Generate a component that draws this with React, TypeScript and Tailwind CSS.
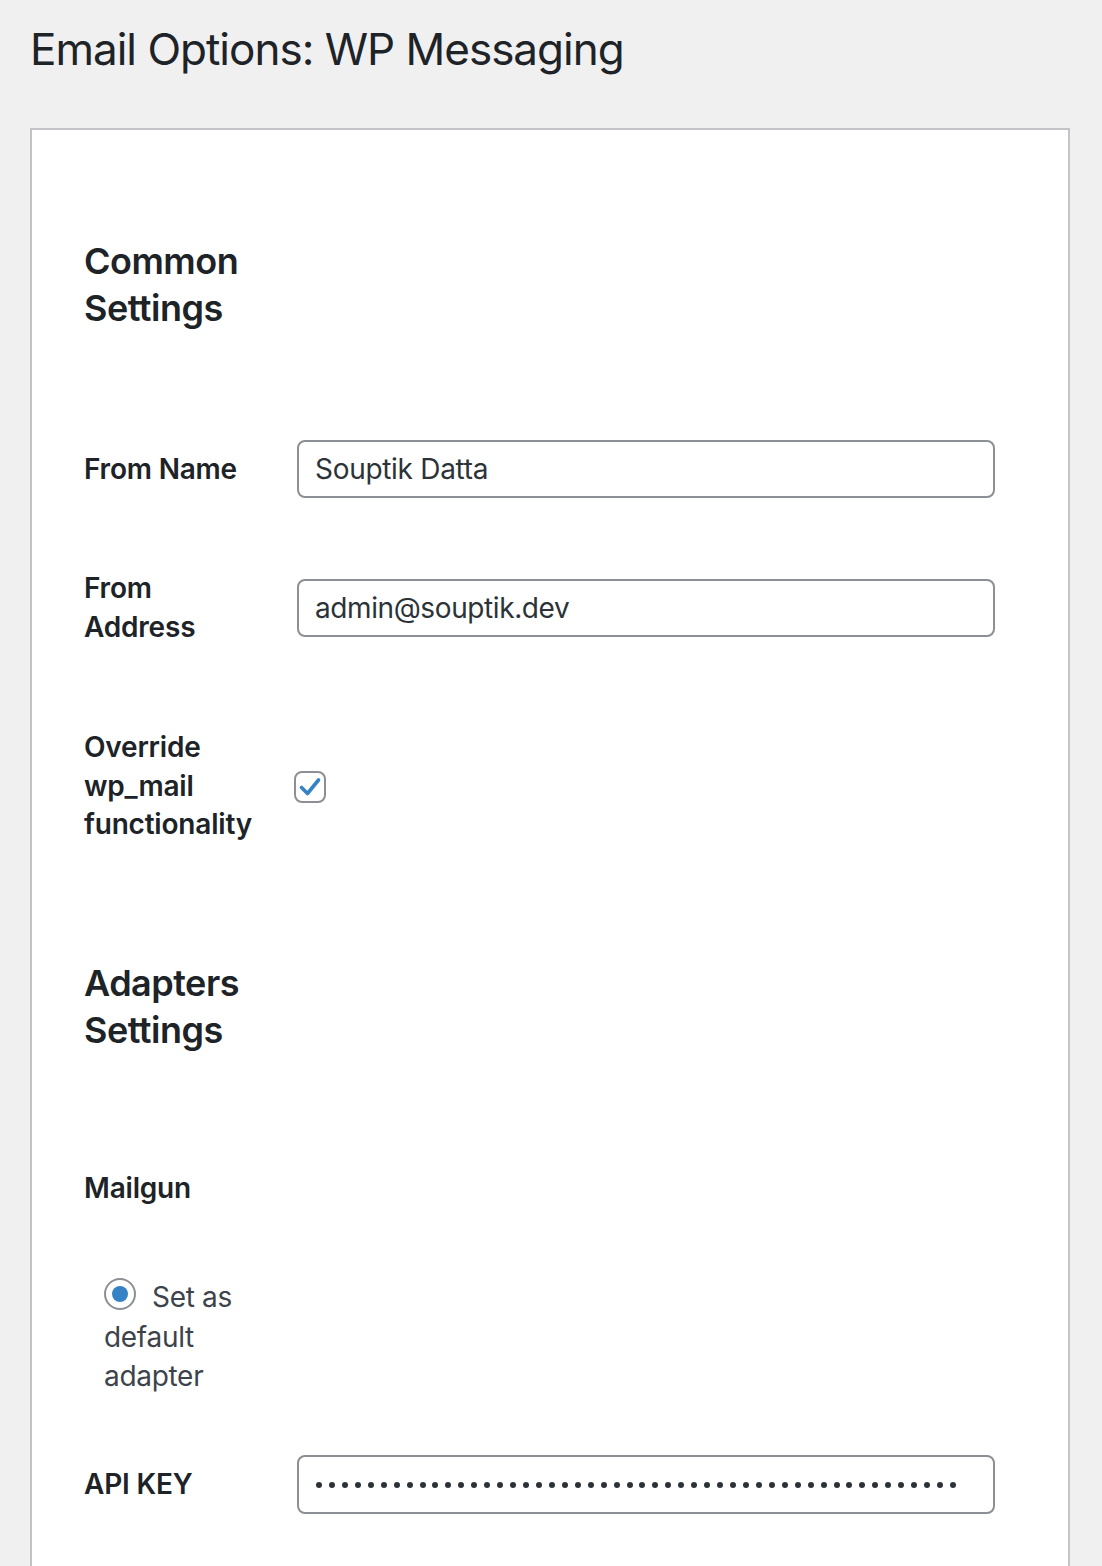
import React from "react";

const font = { fontFamily: "Inter, 'Noto Sans', 'Liberation Sans', sans-serif" };

function Row({ label, children, className = "" }: { label: React.ReactNode; children: React.ReactNode; className?: string }) {
  return (
    <div className={`flex items-center ${className}`}>
      <div className="w-[213px] shrink-0 pr-[20px] text-[28px] font-semibold leading-[38.5px] tracking-[-0.2px] text-[#1d2327]">{label}</div>
      <div className="flex-1">{children}</div>
    </div>
  );
}

export default function App() {
  const dots = Array.from({ length: 50 });
  return (
    <div style={font} className="min-h-[1566px] bg-[#f0f0f1] pl-[30px] pr-[32px] pt-[19px]">
      <h1 className="text-[44px] font-normal leading-[60px] tracking-[-1px] text-[#1d2327]">Email Options: WP Messaging</h1>
      <div className="mt-[49px] border-2 border-[#c3c4c7] bg-white pb-[200px] pl-[52px] pt-[108px]">
        <h2 className="w-[200px] text-[36px] font-semibold leading-[47px] tracking-[-0.5px] text-[#1d2327]">Common Settings</h2>

        <Row label="From Name" className="mt-[108px]">
          <div className="flex h-[58px] w-[698px] items-center rounded-[8px] border-2 border-[#8c8f94] px-[16px] text-[28px] tracking-[-0.3px] text-[#2c3338]">Souptik Datta</div>
        </Row>

        <Row label={<>From<br />Address</>} className="mt-[71px]">
          <div className="flex h-[58px] w-[698px] items-center rounded-[8px] border-2 border-[#8c8f94] px-[16px] text-[28px] tracking-[-0.4px] text-[#2c3338]">admin@souptik.dev</div>
        </Row>

        <Row label={<>Override<br />wp_mail<br />functionality</>} className="mt-[82px]">
          <div className="-ml-[3px] mt-[2px] flex h-[32px] w-[32px] items-center justify-center rounded-[8px] border-2 border-[#8c8f94] bg-white">
            <svg width="24" height="24" viewBox="0 0 24 24" fill="none">
              <path d="M3.5 12.5 L9.5 18.5 L20.5 5" stroke="#3582c4" strokeWidth="3.6" strokeLinecap="round" strokeLinejoin="round" />
            </svg>
          </div>
        </Row>

        <h2 className="mt-[116px] w-[200px] text-[36px] font-semibold leading-[47px] tracking-[-0.5px] text-[#1d2327]">Adapters Settings</h2>

        <div className="mt-[115px] text-[28px] font-semibold leading-[38.5px] tracking-[-0.2px] text-[#1d2327]">Mailgun</div>

        <div className="ml-[20px] mt-[71px] w-[182px] text-[28px] leading-[38.5px] tracking-[-0.3px] text-[#3c434a]">
          <span className="relative -top-[8px] mr-[16px] inline-flex h-[32px] w-[32px] items-center justify-center rounded-full border-2 border-[#8c8f94] bg-white align-[-3px]">
            <span className="h-[16px] w-[16px] rounded-full bg-[#3582c4]" />
          </span>
          Set as default adapter
        </div>

        <Row label="API KEY" className="mt-[60px]">
          <div className="flex h-[59px] w-[698px] items-center gap-[6.94px] rounded-[8px] border-2 border-[#8c8f94] pl-[17px]">
            {dots.map((_, i) => (
              <span key={i} className="h-[6px] w-[6px] shrink-0 rounded-full bg-[#2c3338]" />
            ))}
          </div>
        </Row>
      </div>
    </div>
  );
}
